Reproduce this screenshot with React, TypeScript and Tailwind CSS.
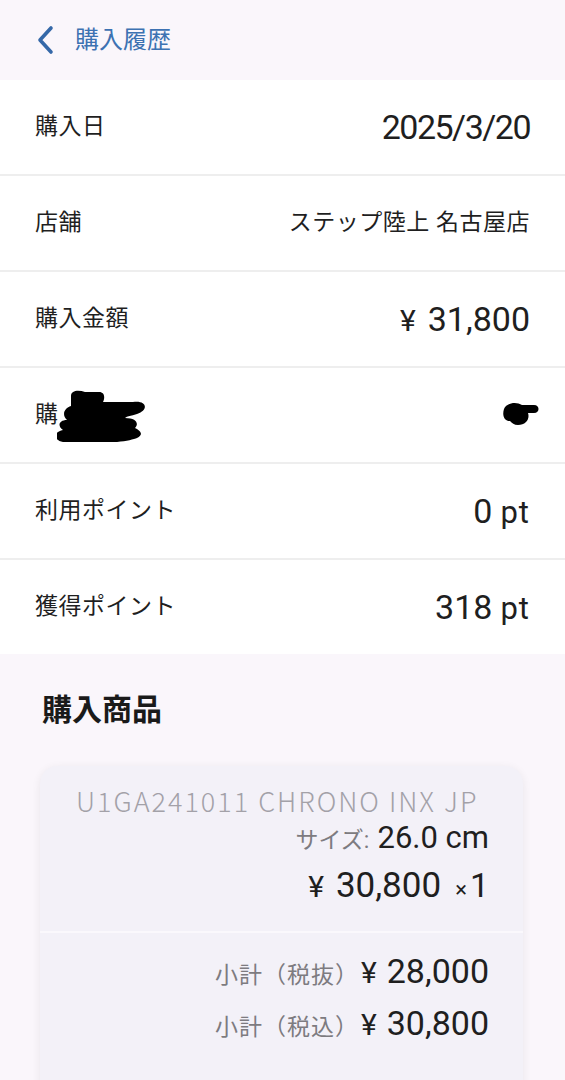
const font = { fontFamily: "Roboto, 'Noto Sans CJK JP', sans-serif" };

interface RowProps {
  label: React.ReactNode;
  children: React.ReactNode;
}

const Row = ({ label, children }: RowProps) => (
  <div className="flex items-center justify-between h-[94px] px-[35px] bg-white">
    <span className="text-[23px] text-[#1f1f1f] tracking-[0.5px]">{label}</span>
    <div className="flex items-baseline text-[#1f1f1f]">{children}</div>
  </div>
);

const Divider = () => <div className="h-[2px] bg-[#eeeeee]" />;

const Redacted = () => (
  <svg width="100" height="54" viewBox="0 0 100 54" className="-ml-[2px]">
    <path
      d="M14 8 c0 -6 8 -6 14 -4 h14 c6 0 6 6 4 10 h30 c14 -2 16 8 4 12 c-6 2 -10 2 -12 4 c12 0 14 6 10 10 c4 2 10 6 2 10 c-8 4 -50 8 -74 4 c-10 -2 -10 -10 0 -12 c-6 -4 -4 -10 4 -10 c-6 -6 -2 -12 4 -14 z"
      fill="#000"
    />
  </svg>
);

export default function App() {
  return (
    <div className="min-h-[1080px] bg-[#faf6fb]" style={font}>
      {/* header */}
      <header className="flex items-center h-[80px] pl-[35px] gap-[20px] bg-[#faf6fb]">
        <svg width="20" height="30" viewBox="0 0 20 30">
          <path
            d="M16 3 L5 15 L16 27"
            fill="none"
            stroke="#3568a8"
            strokeWidth={3.6}
            strokeLinecap="round"
            strokeLinejoin="round"
          />
        </svg>
        <span className="text-[24px] text-[#3d72b2]">購入履歴</span>
      </header>

      <Row label="購入日">
        <span className="text-[34px] tracking-[-1.5px]">2025/3/20</span>
      </Row>
      <Divider />
      <Row label="店舗">
        <span className="text-[23px] tracking-[0.5px]">ステップ陸上 名古屋店</span>
      </Row>
      <Divider />
      <Row label="購入金額">
        <span className="text-[30px] mr-[12px]">¥</span>
        <span className="text-[34px]">31,800</span>
      </Row>
      <Divider />
      <Row
        label={
          <span className="flex items-center">
            <span>購</span>
            <Redacted />
          </span>
        }
      >
        <svg width="42" height="28" viewBox="0 0 42 28" className="-mr-[12px]">
          <path
            d="M4 8 c2 -6 12 -8 18 -4 h12 c6 0 6 8 0 8 h-6 c2 6 -2 12 -10 12 c-4 0 -6 -2 -8 -4 c-6 0 -8 -6 -6 -12 z"
            fill="#000"
          />
        </svg>
      </Row>
      <Divider />
      <Row label="利用ポイント">
        <span className="text-[34px]">0</span>
        <span className="text-[31px] ml-[8px] tracking-[1px]">pt</span>
      </Row>
      <Divider />
      <Row label="獲得ポイント">
        <span className="text-[34px]">318</span>
        <span className="text-[31px] ml-[8px] tracking-[1px]">pt</span>
      </Row>

      {/* purchased items */}
      <section className="pt-[36px] bg-[#faf6fb]">
        <h2 className="px-[42px] text-[30px] leading-[40px] font-bold text-[#1a1a1a]">購入商品</h2>
        <div className="ml-[40px] mr-[42px] mt-[36px] rounded-[18px] bg-[#f3f1f8] shadow-[0_2px_10px_rgba(0,0,0,0.07)]">
          <div className="flex flex-col items-end pt-[17px] pb-[24px] pr-[34px]">
            <span
              className="self-start pl-[36px] text-[27px] font-light tracking-[2px] text-[#a3a1a8] leading-[36px]"
              style={{ fontFamily: "'Noto Sans CJK JP', sans-serif" }}
            >
              U1GA241011 CHRONO INX JP
            </span>
            <div className="flex items-baseline h-[36px] mt-[1px] leading-[36px]">
              <span className="text-[23px] text-[#7d7b80]">サイズ:</span>
              <span className="text-[31px] text-[#1f1f1f] ml-[8px]">26.0 cm</span>
            </div>
            <div className="flex items-baseline h-[44px] mt-[7px] leading-[44px] text-[#1f1f1f]">
              <span className="text-[30px] mr-[12px]">¥</span>
              <span className="text-[35px]">30,800</span>
              <span className="text-[22px] ml-[14px]">×</span>
              <span className="text-[34px] ml-[3px]">1</span>
            </div>
          </div>
          <div className="h-[2px] bg-[#faf8fc]" />
          <div className="flex flex-col items-end gap-[8px] pt-[16px] pb-[70px] pr-[34px]">
            <div className="flex items-baseline h-[44px] leading-[44px]">
              <span className="text-[23px] tracking-[1px] text-[#7d7b80]">小計（税抜）</span>
              <span className="text-[30px] text-[#1f1f1f] ml-[2px] mr-[10px]">¥</span>
              <span className="text-[34px] text-[#1f1f1f]">28,000</span>
            </div>
            <div className="flex items-baseline h-[44px] leading-[44px]">
              <span className="text-[23px] tracking-[1px] text-[#7d7b80]">小計（税込）</span>
              <span className="text-[30px] text-[#1f1f1f] ml-[2px] mr-[10px]">¥</span>
              <span className="text-[34px] text-[#1f1f1f]">30,800</span>
            </div>
          </div>
        </div>
      </section>
    </div>
  );
}
